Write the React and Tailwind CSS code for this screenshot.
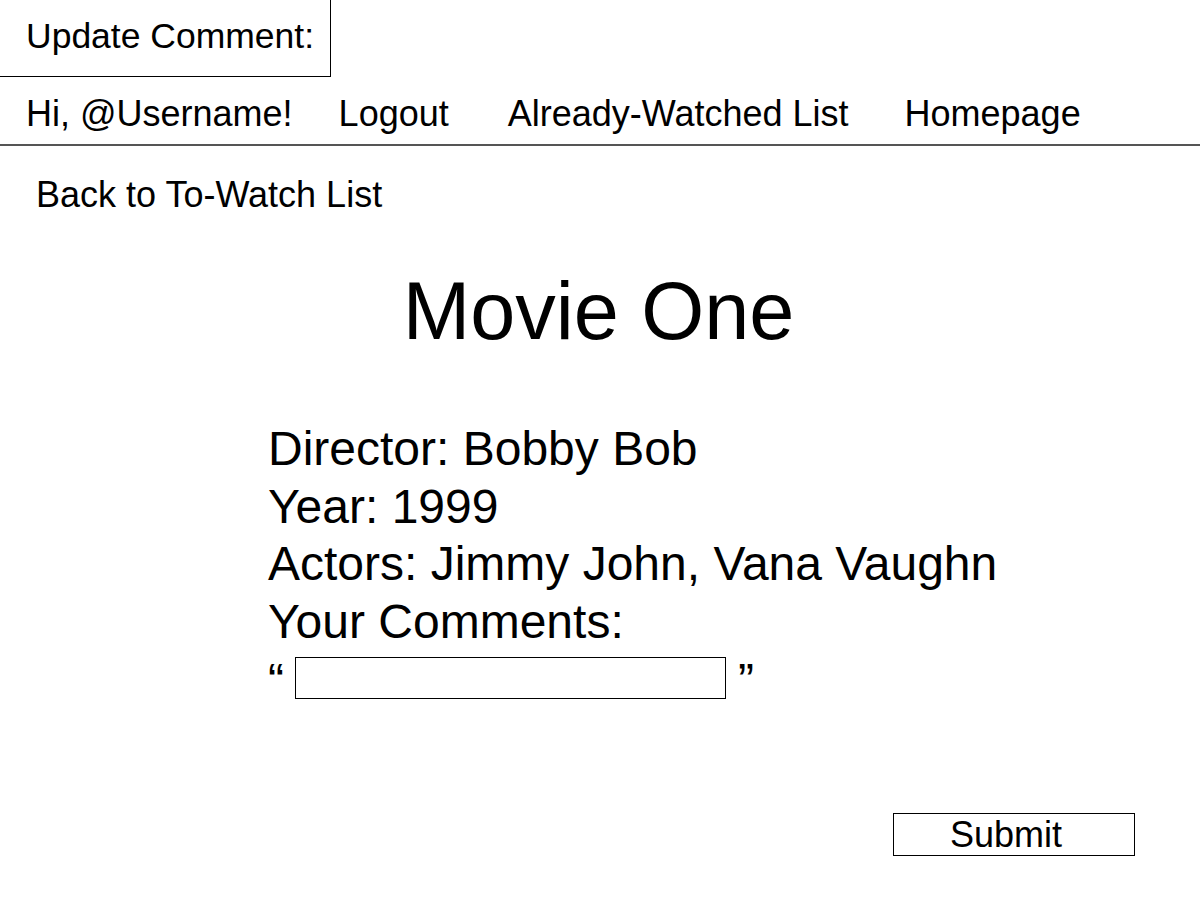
import React from "react";

export default function App() {
  const details = [
    "Director: Bobby Bob",
    "Year: 1999",
    "Actors: Jimmy John, Vana Vaughn",
    "Your Comments:",
  ];

  return (
    <div
      className="w-[1200px] h-[900px] bg-white text-black overflow-hidden"
      style={{ fontFamily: '"Liberation Sans", Arial, sans-serif' }}
    >
      {/* page title box */}
      <div className="w-[331px] h-[77px] border-r border-b border-black pl-[26px] pt-[16px]">
        <span className="block text-[35.5px] leading-[40px]">Update Comment:</span>
      </div>

      {/* nav bar */}
      <nav className="flex pl-[26px] pt-[17px] pb-[10px] border-b-2 border-[#555] text-[36px] leading-[40px]">
        <a>Hi, @Username!</a>
        <a className="ml-[46px]">Logout</a>
        <a className="ml-[59px]">Already-Watched List</a>
        <a className="ml-[56px]">Homepage</a>
      </nav>

      <div className="pl-[36px] mt-[29px] text-[36px] leading-[40px]">
        <a>Back to To-Watch List</a>
      </div>

      <h1 className="mt-[51px] text-center text-[81px] leading-[90px] pr-[3px]">
        Movie One
      </h1>

      <div className="mt-[64px] pl-[268px] text-[48px] leading-[57.5px]">
        {details.map((line) => (
          <div key={line}>{line}</div>
        ))}
        <div className="flex items-start mt-[7px] leading-[48px]">
          <span>“</span>
          <input
            className="ml-[11px] w-[431px] h-[42px] border border-black outline-none"
            type="text"
          />
          <span className="ml-[12px]">”</span>
        </div>
      </div>

      <div className="flex justify-end pr-[65px] mt-[108px]">
        <button className="w-[242px] h-[43px] border border-black pr-4 text-[36px] leading-[40px]">
          Submit
        </button>
      </div>
    </div>
  );
}
